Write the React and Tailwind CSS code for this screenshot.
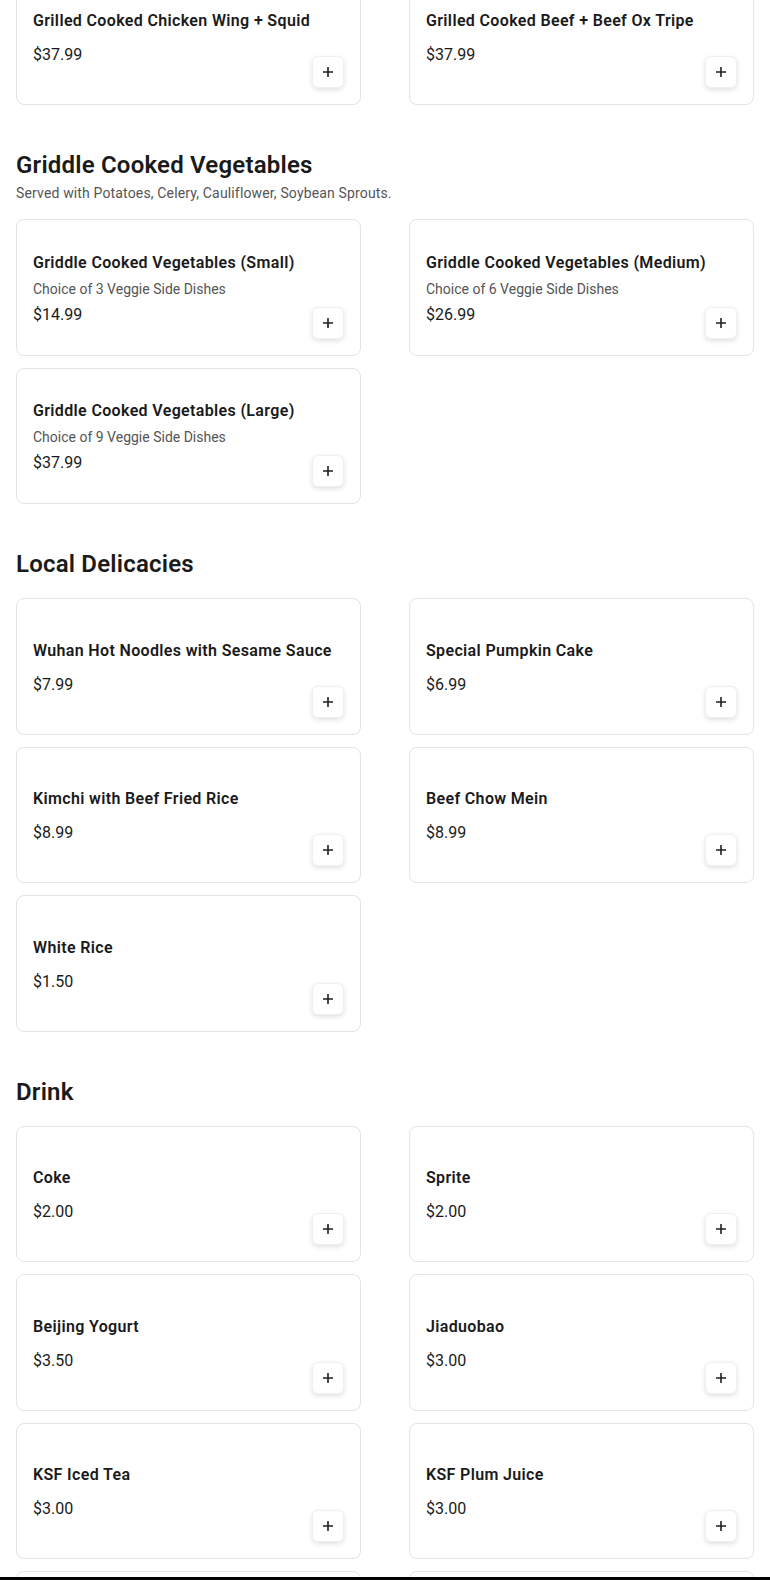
import React from "react";

const sections = [
  {
    title: null,
    items: [
      { name: "Grilled Cooked Chicken Wing + Squid", price: "$37.99" },
      { name: "Grilled Cooked Beef + Beef Ox Tripe", price: "$37.99" },
    ],
  },
  {
    title: "Griddle Cooked Vegetables",
    subtitle: "Served with Potatoes, Celery, Cauliflower, Soybean Sprouts.",
    items: [
      { name: "Griddle Cooked Vegetables (Small)", desc: "Choice of 3 Veggie Side Dishes", price: "$14.99" },
      { name: "Griddle Cooked Vegetables (Medium)", desc: "Choice of 6 Veggie Side Dishes", price: "$26.99" },
      { name: "Griddle Cooked Vegetables (Large)", desc: "Choice of 9 Veggie Side Dishes", price: "$37.99" },
    ],
  },
  {
    title: "Local Delicacies",
    items: [
      { name: "Wuhan Hot Noodles with Sesame Sauce", price: "$7.99" },
      { name: "Special Pumpkin Cake", price: "$6.99" },
      { name: "Kimchi with Beef Fried Rice", price: "$8.99" },
      { name: "Beef Chow Mein", price: "$8.99" },
      { name: "White Rice", price: "$1.50" },
    ],
  },
  {
    title: "Drink",
    items: [
      { name: "Coke", price: "$2.00" },
      { name: "Sprite", price: "$2.00" },
      { name: "Beijing Yogurt", price: "$3.50" },
      { name: "Jiaduobao", price: "$3.00" },
      { name: "KSF Iced Tea", price: "$3.00" },
      { name: "KSF Plum Juice", price: "$3.00" },
      { name: "Wang Lao Ji", price: "$3.00" },
      { name: "Bottled Water", price: "$1.50" },
    ],
  },
];

function PlusIcon() {
  return (
    <svg width="10" height="10" viewBox="0 0 10 10" fill="none">
      <path d="M5 0.5V9.5M0.5 5H9.5" stroke="#1f1f1f" strokeWidth="1.6" strokeLinecap="round" />
    </svg>
  );
}

function Card({ item }) {
  return (
    <div className="flex h-[136.5px] justify-between rounded-lg border border-[#e4e4e4] bg-white px-4 pb-4 pt-[19px]">
      <div className="flex min-w-0 flex-col self-center">
        <div className="whitespace-nowrap text-[16px] font-semibold leading-6 tracking-[0.35px] text-[#1a1a1a]">
          {item.name}
        </div>
        {item.desc ? (
          <>
            <div className="mt-1 text-[14px] leading-5 text-[#555555]">{item.desc}</div>
            <div className="mt-[4px] text-[16px] leading-6 text-[#1a1a1a]">{item.price}</div>
          </>
        ) : (
          <div className="mt-[10px] text-[16px] leading-6 text-[#1a1a1a]">{item.price}</div>
        )}
      </div>
      <button className="flex h-8 w-8 shrink-0 items-center justify-center self-end rounded-md border border-[#f0f0f0] bg-white shadow-[0_2px_5px_rgba(0,0,0,0.12)]">
        <PlusIcon />
      </button>
    </div>
  );
}

export default function App() {
  return (
    <div
      className="relative h-[1580px] overflow-hidden bg-white px-4"
      style={{ fontFamily: "Roboto, 'Noto Sans', 'Liberation Sans', sans-serif" }}
    >
      {sections.map((s, i) => (
        <section key={i} className={i === 0 ? "-mt-[31.5px]" : "mt-[42px]"}>
          {s.title && (
            <div className="mb-[16px]">
              <h2 className="text-[24px] font-semibold leading-9 tracking-[0.2px] text-[#1a1a1a]">{s.title}</h2>
              {s.subtitle && (
                <p className="text-[14px] leading-5 tracking-[0.15px] text-[#555555]">{s.subtitle}</p>
              )}
            </div>
          )}
          <div className="grid grid-cols-2 gap-x-12 gap-y-3">
            {s.items.map((it, j) => (
              <Card key={j} item={it} />
            ))}
          </div>
        </section>
      ))}
      <div className="absolute inset-x-0 bottom-0 h-[3px] bg-black" />
    </div>
  );
}
